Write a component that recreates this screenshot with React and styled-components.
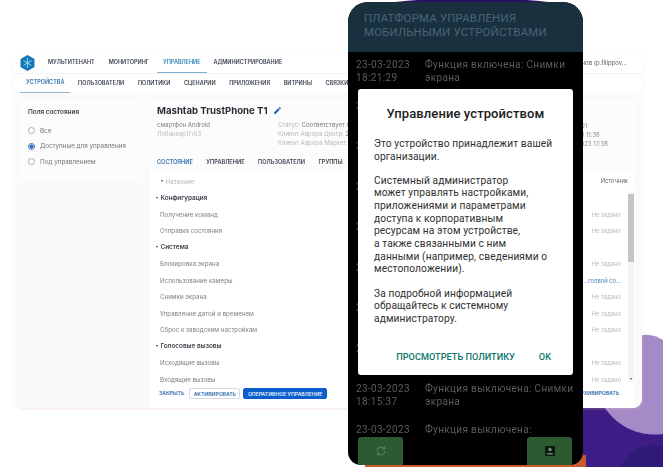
import React from "react";
import styled, { createGlobalStyle } from "styled-components";

const Global = createGlobalStyle`
  html, body { margin: 0; padding: 0; background: #fff; }
  * { box-sizing: border-box; }
`;

const Scene = styled.div`
  position: relative;
  width: 663px;
  height: 467px;
  overflow: hidden;
  background: #fff;
  font-family: Inter, "Liberation Sans", sans-serif;
`;

const Backdrop = styled.svg`
  position: absolute;
  inset: 0;
`;

const AppWindow = styled.div`
  position: absolute;
  left: 14px;
  top: 52px;
  width: 628px;
  height: 356px;
  display: flex;
  flex-direction: column;
  background: #fff;
  border-radius: 9px;
  overflow: hidden;
  box-shadow: 0 1px 3px rgba(235, 190, 185, 0.35);
  filter: blur(0.35px);
`;

const TopBar = styled.div`
  height: 21px;
  flex: none;
  display: flex;
  align-items: stretch;
  padding-left: 6px;
  position: relative;
`;

const Logo = styled.svg`
  width: 15px;
  height: 16px;
  margin: 3px 7px 0 0;
  flex: none;
`;

const NavItem = styled.div`
  height: 21px;
  padding: 0 6px;
  margin-right: ${(p) => p.$gap ?? 2}px;
  display: flex;
  align-items: center;
  font-size: 5.5px;
  font-weight: 600;
  white-space: nowrap;
  color: ${(p) => (p.$active ? "#2f7fb8" : "#3c4450")};
  border-bottom: 1px solid ${(p) => (p.$active ? "#7fb0d0" : "transparent")};
`;

const UserName = styled.div`
  position: absolute;
  right: 15px;
  top: 7px;
  font-size: 6px;
  color: #555b63;
  white-space: nowrap;
`;

const SubBar = styled.div`
  height: 20px;
  flex: none;
  display: flex;
  align-items: stretch;
  padding-left: 6px;
  border-top: 1px solid #f2f3f5;
`;

const SubItem = styled(NavItem)`
  height: 20px;
  padding: 0 6px 2px;
  margin-right: 1.65px;
  border-bottom-width: ${(p) => (p.$active ? 2 : 1)}px;
  border-bottom-color: ${(p) => (p.$active ? "#8fb4cc" : "transparent")};
  color: ${(p) => (p.$active ? "#2f72b0" : "#3c4450")};
`;

const Body = styled.div`
  flex: 1;
  display: flex;
  gap: 12px;
  align-items: flex-start;
  padding: 7px 7px 0 6px;
  background: #fafafb;
  min-height: 0;
`;

const StatePanel = styled.div`
  width: 118px;
  height: 80px;
  flex: none;
  background: #fcfcfd;
  padding: 8px 8px;
`;

const PanelTitle = styled.div`
  font-size: 6.4px;
  font-weight: 600;
  color: #3f454d;
  margin-bottom: 7px;
`;

const RadioRow = styled.div`
  height: 15.6px;
  display: flex;
  align-items: center;
  gap: 5px;
  font-size: 6.3px;
  color: #70767e;
`;

const Radio = styled.span`
  width: 7px;
  height: 7px;
  border-radius: 50%;
  flex: none;
  border: 1px solid ${(p) => (p.$on ? "#2c6fb5" : "#a9adb3")};
  background: ${(p) => (p.$on ? "radial-gradient(circle, #2c6fb5 55%, #fff 60%)" : "#fff")};
`;

const Main = styled.div`
  flex: 1;
  align-self: stretch;
  min-width: 0;
  display: flex;
  flex-direction: column;
`;

const DeviceCard = styled.div`
  height: 71px;
  flex: none;
  background: #fcfcfd;
  padding: 4px 7px 0 7px;
`;

const TitleRow = styled.div`
  display: flex;
  align-items: center;
  gap: 5px;
  font-size: 9.6px;
  font-weight: 700;
  color: #2a2f36;
  height: 13px;
`;

const DeviceInfo = styled.div`
  display: flex;
  margin-top: 3px;
`;

const InfoColumn = styled.div`
  width: 121px;
  flex: none;
  font-size: 6px;
  line-height: 9px;
  color: #767c84;
`;

const Faint = styled.span`
  color: #b5b9be;
`;

const InfoValues = styled.div`
  margin-left: auto;
  margin-right: 20px;
  padding-top: 1px;
  font-size: 6px;
  line-height: 9px;
  color: #8b9096;
  white-space: nowrap;
`;

const Tabs = styled.div`
  display: flex;
  height: 18px;
  margin-top: 7px;
`;

const Tab = styled.div`
  padding: 0 5px;
  margin-right: 3.5px;
  margin-left: ${(p) => (p.$first ? "-5px" : "0")};
  height: 18px;
  padding-top: 4px;
  font-size: 5.6px;
  font-weight: 600;
  white-space: nowrap;
  color: ${(p) => (p.$active ? "#2f72b0" : "#3c4450")};
  border-bottom: 1px solid ${(p) => (p.$active ? "#8fb4cc" : "transparent")};
`;

const TableArea = styled.div`
  position: relative;
  flex: 1;
  background: #fff;
  padding-left: 5px;
  padding-top: 2px;
  overflow: hidden;
`;

const SourceHead = styled.div`
  position: absolute;
  right: 7px;
  top: 6px;
  font-size: 5.8px;
  color: #61666d;
`;

const Row = styled.div`
  height: 16.5px;
  display: flex;
  align-items: center;
  padding-right: 14px;
  font-size: ${(p) => (p.$head ? 6.4 : 6.2)}px;
  font-weight: ${(p) => (p.$head ? 600 : 400)};
  color: ${(p) => (p.$head ? "#3f454d" : "#7b8087")};
  padding-left: ${(p) => (p.$head ? 0 : 5)}px;
  white-space: nowrap;
`;

const Caret = styled.span`
  width: 0;
  height: 0;
  border-left: 1.7px solid transparent;
  border-right: 1.7px solid transparent;
  border-top: 2.6px solid #3f454d;
  margin-right: 3px;
  margin-left: 0.5px;
`;

const RowValue = styled.span`
  margin-left: auto;
  font-size: 5.8px;
  color: ${(p) => (p.$link ? "#4f86c4" : "#b6babf")};
`;

const ScrollTrack = styled.div`
  position: absolute;
  right: 1px;
  top: 20px;
  width: 6px;
  height: 191px;
  background: #f5f5f6;
`;

const ScrollThumb = styled.div`
  width: 6px;
  height: 68px;
  margin-top: 3px;
  background: #c4c5c7;
`;

const ScrollArrow = styled.span`
  position: absolute;
  left: 1.5px;
  bottom: 2px;
  width: 0;
  height: 0;
  border-left: 1.5px solid transparent;
  border-right: 1.5px solid transparent;
  border-top: 2.5px solid #444;
`;

const Footer = styled.div`
  position: absolute;
  left: 0;
  right: 0;
  bottom: 0;
  height: 21px;
  padding: 1px 16px 0 9px;
  display: flex;
  align-items: flex-start;
  gap: 5px;
  background: #fff;
`;

const TextButton = styled.div`
  height: 11px;
  line-height: 11px;
  font-size: 5.1px;
  font-weight: 600;
  color: #2f6bb0;
  margin-left: ${(p) => (p.$push ? "auto" : "0")};
`;

const OutlineButton = styled.div`
  height: 11px;
  padding: 0 3.5px;
  display: flex;
  align-items: center;
  font-size: 5.1px;
  font-weight: 600;
  color: #2f6bb0;
  border: 1px solid #d5dbe4;
  border-radius: 2px;
`;

const SolidButton = styled(OutlineButton)`
  background: #0b5fcb;
  border-color: #0b5fcb;
  color: #e6f0ff;
  margin-left: -2px;
`;

const Phone = styled.div`
  position: absolute;
  left: 348px;
  top: 2px;
  width: 235px;
  height: 463px;
  background: #000;
  border-radius: 20px 20px 13px 13px;
  overflow: hidden;
  display: flex;
  flex-direction: column;
`;

const PhoneHeader = styled.div`
  height: 50px;
  flex: none;
  padding: 10px 16px 0;
  background: #19303f;
  font-family: Roboto, sans-serif;
  font-size: 11.4px;
  line-height: 13.5px;
  letter-spacing: 0.2px;
  color: #486675;
`;

const LogList = styled.div`
  flex: 1;
  padding: 7px 8px 0;
  font-family: Roboto, sans-serif;
  font-size: 10px;
  line-height: 12.6px;
  letter-spacing: 0.35px;
  color: #5b5b5b;
  overflow: hidden;
`;

const LogEntry = styled.div`
  display: grid;
  grid-template-columns: 69px 1fr;
  height: 40.5px;
  white-space: pre-line;
`;

const Modal = styled.div`
  position: absolute;
  left: 10px;
  top: 87px;
  width: 215px;
  height: 286px;
  background: #fff;
  border-radius: 3px;
  padding: 16px 16px 0;
  font-family: Roboto, sans-serif;
  color: #303030;
  display: flex;
  flex-direction: column;
`;

const ModalTitle = styled.div`
  font-size: 13px;
  line-height: 18px;
  font-weight: 500;
  letter-spacing: 0.1px;
  text-align: center;
  color: #202020;
  margin-bottom: 15px;
`;

const ModalText = styled.p`
  margin: 0 0 11.5px;
  font-size: 10.2px;
  line-height: 12.65px;
  letter-spacing: 0.1px;
  white-space: pre-line;
`;

const ModalActions = styled.div`
  margin-top: auto;
  margin-bottom: 12px;
  display: flex;
  justify-content: flex-end;
  gap: 24px;
  padding-right: 6px;
  font-size: 9.2px;
  line-height: 12px;
  font-weight: 500;
  color: #0a766c;
`;

const PhoneButton = styled.div`
  position: absolute;
  bottom: 0;
  ${(p) => (p.$right ? "right: 11px;" : "left: 10px;")}
  width: 45px;
  height: 28px;
  border-radius: 3px 3px 0 0;
  background: #2d5a30;
  display: flex;
  align-items: center;
  justify-content: center;
`;

const logEntries = [
  ["23-03-2023\n18:21:29", "Функция включена: Снимки\nэкрана"],
  ["23-03-2023", ""],
  ["23-03-2023", ""],
  ["23-03-2023", ""],
  ["23-03-2023", ""],
  ["23-03-2023", ""],
  ["23-03-2023", ""],
  ["23-03-2023", ""],
  ["23-03-2023\n18:15:37", "Функция выключена: Снимки\nэкрана"],
  ["23-03-2023", "Функция выключена:"],
];

const rows = [
  { text: "Название", caret: true },
  { text: "Конфигурация", head: true },
  { text: "Получение команд", value: "Не задано" },
  { text: "Отправка состояния", value: "Не задано" },
  { text: "Система", head: true },
  { text: "Блокировка экрана", value: "Не задано" },
  { text: "Использование камеры", value: "…голвой со…", link: true },
  { text: "Снимки экрана", value: "Не задано" },
  { text: "Управление датой и временем", value: "Не задано" },
  { text: "Сброс к заводским настройкам", value: "Не задано" },
  { text: "Голосовые вызовы", head: true },
  { text: "Исходящие вызовы", value: "Не задано" },
  { text: "Входящие вызовы", value: "Не задано" },
];

export default function App() {
  return (
    <Scene>
      <Global />
      <Backdrop width="663" height="467" viewBox="0 0 663 467">
        <path d="M380 4 C430 -4 530 -4 572 6 L572 14 L380 14 Z" fill="#2c1065" />
        <path d="M583 400 L663 400 L663 467 L583 467 Z" fill="#3d1c86" />
        <path d="M620 467 C630 448 650 442 663 446 L663 467 Z" fill="#2f1a78" />
        <path d="M640 336 C648 333 656 336 663 340 L663 434 C640 437 615 428 600 400 Z" fill="#a48ac6" />
        <path d="M365 455 L586 455 L586 467 L365 467 Z" fill="#c95a30" />
      </Backdrop>

      <AppWindow>
        <TopBar>
          <Logo viewBox="0 0 15 16">
            <path d="M7.5 0 L14.5 4 L14.5 12 L7.5 16 L0.5 12 L0.5 4 Z" fill="#1477b8" />
            <path d="M7.5 3 V13 M3.5 5.5 L11.5 10.5 M11.5 5.5 L3.5 10.5" stroke="#8fd6ee" strokeWidth="1" />
          </Logo>
          <NavItem>МУЛЬТИТЕНАНТ</NavItem>
          <NavItem>МОНИТОРИНГ</NavItem>
          <NavItem $active $gap={1}>УПРАВЛЕНИЕ</NavItem>
          <NavItem>АДМИНИСТРИРОВАНИЕ</NavItem>
          <UserName>нов (p.filippov...</UserName>
        </TopBar>
        <SubBar>
          <SubItem $active>УСТРОЙСТВА</SubItem>
          <SubItem>ПОЛЬЗОВАТЕЛИ</SubItem>
          <SubItem>ПОЛИТИКИ</SubItem>
          <SubItem>СЦЕНАРИИ</SubItem>
          <SubItem>ПРИЛОЖЕНИЯ</SubItem>
          <SubItem>ВИТРИНЫ</SubItem>
          <SubItem>СВЯЗКИ</SubItem>
        </SubBar>
        <Body>
          <StatePanel>
            <PanelTitle>Поля состояния</PanelTitle>
            <RadioRow><Radio />Все</RadioRow>
            <RadioRow><Radio $on />Доступные для управления</RadioRow>
            <RadioRow><Radio />Под управлением</RadioRow>
          </StatePanel>
          <Main>
            <DeviceCard>
              <TitleRow>
                Mashtab TrustPhone T1
                <svg width="9" height="9" viewBox="0 0 24 24" fill="#1f5fa8">
                  <path d="M3 17.25V21h3.75L17.81 9.94l-3.75-3.75L3 17.25zM20.71 7.04a1 1 0 0 0 0-1.41l-2.34-2.34a1 1 0 0 0-1.41 0l-1.83 1.83 3.75 3.75 1.83-1.83z" />
                </svg>
              </TitleRow>
              <DeviceInfo>
                <InfoColumn>
                  смартфон Android
                  <br />
                  <Faint>Лобанхар17/03</Faint>
                </InfoColumn>
                <InfoColumn>
                  <Faint>Статус:</Faint> Соответствует политикам
                  <br />
                  <Faint>Клиент Аврора Центр:</Faint> 2.0
                  <br />
                  <Faint>Клиент Аврора Маркет:</Faint> —
                </InfoColumn>
                <InfoValues>
                  1:01
                  <br />
                  23 11:38
                  <br />
                  2023 17:38
                </InfoValues>
              </DeviceInfo>
              <Tabs>
                <Tab $first $active>СОСТОЯНИЕ</Tab>
                <Tab>УПРАВЛЕНИЕ</Tab>
                <Tab>ПОЛЬЗОВАТЕЛИ</Tab>
                <Tab>ГРУППЫ</Tab>
                <Tab>СВЯЗКИ</Tab>
              </Tabs>
            </DeviceCard>
            <TableArea>
              <SourceHead>Источник</SourceHead>
              {rows.map((r) => (
                <Row key={r.text} $head={r.head}>
                  {(r.head || r.caret) && <Caret />}
                  {r.caret ? <Faint>{r.text}</Faint> : r.text}
                  {r.value && <RowValue $link={r.link}>{r.value}</RowValue>}
                </Row>
              ))}
              <ScrollTrack>
                <ScrollThumb />
                <ScrollArrow />
              </ScrollTrack>
              <Footer>
                <TextButton>ЗАКРЫТЬ</TextButton>
                <OutlineButton>АКТИВИРОВАТЬ</OutlineButton>
                <SolidButton>ОПЕРАТИВНОЕ УПРАВЛЕНИЕ</SolidButton>
                <TextButton $push>АРХИВИРОВАТЬ</TextButton>
              </Footer>
            </TableArea>
          </Main>
        </Body>
      </AppWindow>

      <Phone>
        <PhoneHeader>
          ПЛАТФОРМА УПРАВЛЕНИЯ
          <br />
          МОБИЛЬНЫМИ УСТРОЙСТВАМИ
        </PhoneHeader>
        <LogList>
          {logEntries.map((l, i) => (
            <LogEntry key={i}>
              <span>{l[0]}</span>
              <span>{l[1]}</span>
            </LogEntry>
          ))}
        </LogList>
        <Modal>
          <ModalTitle>Управление устройством</ModalTitle>
          <ModalText>{"Это устройство принадлежит вашей\nорганизации."}</ModalText>
          <ModalText>
            {"Системный администратор\nможет управлять настройками,\nприложениями и параметрами\nдоступа к корпоративным\nресурсам на этом устройстве,\nа также связанными с ним\nданными (например, сведениями о\nместоположении)."}
          </ModalText>
          <ModalText>{"За подробной информацией\nобращайтесь к системному\nадминистратору."}</ModalText>
          <ModalActions>
            <span>ПРОСМОТРЕТЬ ПОЛИТИКУ</span>
            <span>OK</span>
          </ModalActions>
        </Modal>
        <PhoneButton>
          <svg width="12" height="12" viewBox="0 0 24 24" fill="none" stroke="#58805a" strokeWidth="2.4">
            <path d="M4 12a8 8 0 0 1 13-6l2 2M20 12a8 8 0 0 1-13 6l-2-2" />
            <path d="M19 3v5h-5M5 21v-5h5" />
          </svg>
        </PhoneButton>
        <PhoneButton $right>
          <svg width="12" height="12" viewBox="0 0 24 24">
            <rect x="2" y="2" width="20" height="20" rx="1" fill="#0c1a0d" />
            <circle cx="12" cy="9" r="3.4" fill="#6f9272" />
            <path d="M5 19c1-4 13-4 14 0z" fill="#6f9272" />
          </svg>
        </PhoneButton>
      </Phone>
    </Scene>
  );
}
